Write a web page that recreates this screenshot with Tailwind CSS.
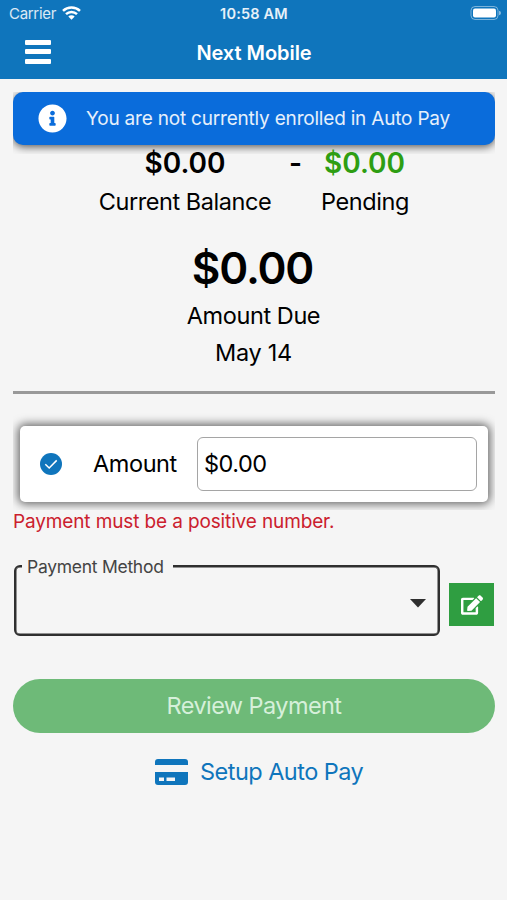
<!DOCTYPE html>
<html lang="en">
<head>
<meta charset="utf-8">
<title>Next Mobile</title>
<script src="https://cdn.jsdelivr.net/npm/@tailwindcss/browser@4"></script>
</head>
<body class="bg-[#f5f5f5]">
<div class="w-[507px] h-[900px] overflow-hidden bg-[#f5f5f5] font-['Inter',sans-serif] text-black flex flex-col whitespace-nowrap">
  <header class="h-[79px] shrink-0 bg-[#0f75bc] text-white">
    <div class="h-[27px] grid grid-cols-3 items-center">
      <div class="flex items-center pl-[9px] gap-[6px]">
        <span class="text-[15px] leading-[27px] tracking-[-0.3px] text-white/85">Carrier</span>
        <svg class="w-[19px] h-[14px] -mt-[2px]" viewBox="0 0 19 14" fill="none" stroke="#fff" stroke-width="2.5"><path d="M1 4.9a12.3 12.3 0 0 1 17 0"/><path d="M4 8.2a8 8 0 0 1 11 0"/><path d="M9.5 13.8 6.3 10.5a4.6 4.6 0 0 1 6.4 0z" fill="#fff" stroke="none"/></svg>
      </div>
      <div class="text-center text-[14.5px] leading-[27px] font-semibold tracking-[0.2px] text-white/90 pl-[1px]">10:58 AM</div>
      <div class="flex justify-end pr-[6px]">
        <svg class="w-[31px] h-[14px] -mt-[1px]" viewBox="0 0 31 14"><rect x="1" y=".5" width="27" height="13" rx="4" fill="none" stroke="#fff" stroke-opacity=".45"/><rect x="3" y="2.5" width="23" height="9" rx="2" fill="#fff"/><path d="M29 4.7q2 .6 2 2.3t-2 2.3z" fill="#fff" fill-opacity=".5"/></svg>
      </div>
    </div>
    <div class="h-[52px] grid grid-cols-[100px_1fr_100px] items-start">
      <div class="pl-[25px] pt-[13px]">
        <div class="w-[26px] flex flex-col gap-[4.8px]">
          <div class="h-[4.7px] bg-white rounded-[1px]"></div><div class="h-[4.7px] bg-white rounded-[1px]"></div><div class="h-[4.7px] bg-white rounded-[1px]"></div>
        </div>
      </div>
      <h1 class="text-center text-[20px] leading-[52px] font-semibold tracking-[-0.05px] pl-[1px]">Next Mobile</h1>
    </div>
  </header>

  <main class="px-[13px] pt-[13px] flex flex-col">
    <div class="relative h-[62px] w-[482px] -mr-[1px] overflow-hidden shrink-0">
      <div class="h-[53px] rounded-[10px] bg-[#0a6cdb] text-white flex items-center pl-[25px] gap-[19px] shadow-[0_2px_8px_rgba(0,0,0,0.65)]">
        <svg class="w-[29px] h-[29px] shrink-0" viewBox="0 0 512 512" fill="#fff"><path d="M256 8C119.043 8 8 119.083 8 256c0 136.997 111.043 248 248 248s248-111.003 248-248C504 119.083 392.957 8 256 8zm0 110c23.196 0 42 18.804 42 42s-18.804 42-42 42-42-18.804-42-42 18.804-42 42-42zm56 254c0 6.627-5.373 12-12 12h-88c-6.627 0-12-5.373-12-12v-24c0-6.627 5.373-12 12-12h12v-64h-12c-6.627 0-12-5.373-12-12v-24c0-6.627 5.373-12 12-12h64c6.627 0 12 5.373 12 12v100h12c6.627 0 12 5.373 12 12v24z"/></svg>
        <span class="text-[19px] tracking-[-0.2px] text-white/90 pt-[1px]">You are not currently enrolled in Auto Pay</span>
      </div>
    </div>

    <div class="-mt-[9px] h-[78px] grid grid-cols-[344px_1fr] grid-rows-[36px_42px] relative">
      <div class="flex">
        <span class="w-[344px] text-center text-[28px] leading-[37px] font-semibold">$0.00</span>
        <span class="-ml-[68px] text-[28px] leading-[37px] font-semibold">-</span>
      </div>
      <div class="-ml-[50px] w-[115px] text-center text-[28px] leading-[37px] font-semibold text-[#2e9e12]">$0.00</div>
      <div class="text-center text-[23.5px] leading-[42px] tracking-[-0.44px]">Current Balance</div>
      <div class="-ml-[50px] w-[116px] text-center text-[23.5px] leading-[42px] tracking-[-0.44px]">Pending</div>
    </div>

    <div class="text-center mt-[18px]">
      <div class="text-[44px] leading-[54px] font-semibold tracking-[-1.2px] pr-[2px]">$0.00</div>
      <div class="text-[23.5px] leading-[37px] mt-[2px] tracking-[-0.42px]">Amount Due</div>
      <div class="text-[23.5px] leading-[37px] tracking-[-0.3px]">May 14</div>
    </div>

    <div class="mt-[20px] h-[2.5px] w-[482px] bg-[#999999]"></div>

    <div class="mt-[18.500px] w-[482px] h-[98px] pt-[14px] px-[7px] overflow-hidden">
      <div class="h-[76px] bg-white rounded-[5px] shadow-[0_0_10px_2px_rgba(0,0,0,0.6)] flex items-center pl-[20px]">
        <svg class="w-[22px] h-[22px]" viewBox="0 0 22 22"><circle cx="11" cy="11" r="11" fill="#0f75bc"/><path d="M5.3 11.2 9.2 15 16.7 7.4" fill="none" stroke="#fff" stroke-width="1.5"/></svg>
        <span class="ml-[31px] w-[104px] text-[23.5px] tracking-[-0.42px]">Amount</span>
        <div class="w-[280px] h-[54px] border border-[#a5a5a5] rounded-[6px] flex items-center pl-[6px] text-[23.5px] tracking-[-0.5px]">$0.00</div>
      </div>
    </div>
    <div class="-mt-[1px] text-[19px] leading-[25px] tracking-[-0.13px] text-[#cb202d]">Payment must be a positive number.</div>

    <div class="mt-[32px] flex items-start">
      <div class="relative w-[427px] h-[71px] ml-[1px] border-2 border-[#2f2f2f] rounded-[6px] -mt-[1px] shadow-[inset_0_0_0_0.5px_#2f2f2f]">
        <span class="absolute left-[6px] -top-[14px] w-[151px] bg-[#f5f5f5] pl-[5px] text-[17.5px] leading-[27px] tracking-[-0.27px] text-[#444]">Payment Method</span>
        <svg class="absolute right-[12px] top-[32px] w-[16px] h-[9px]" viewBox="0 0 16 9"><path d="M0 0h16L8 8.5z" fill="#2f2f2f"/></svg>
      </div>
      <div class="ml-[9px] mt-[17px] w-[45px] h-[43px] bg-[#2f9e41] flex items-center justify-center">
        <svg class="w-[22px] h-[20px]" viewBox="0 0 576 512" fill="#fff"><path d="M402.6 83.2l90.2 90.2c3.8 3.8 3.8 10 0 13.8L274.4 405.6l-92.8 10.3c-12.4 1.4-22.9-9.1-21.5-21.5l10.3-92.8L388.8 83.2c3.8-3.8 10-3.8 13.8 0zm162-22.9l-48.8-48.8c-15.2-15.2-39.9-15.2-55.2 0l-35.4 35.4c-3.8 3.8-3.8 10 0 13.8l90.2 90.2c3.8 3.8 10 3.8 13.8 0l35.4-35.4c15.2-15.3 15.2-40 0-55.2zM384 346.2V448H64V128h229.8c3.2 0 6.2-1.3 8.5-3.5l40-40c7.6-7.6 2.2-20.5-8.500-20.500H48C21.500 64 0 85.500 0 112v352c0 26.500 21.500 48 48 48h352c26.500 0 48-21.500 48-48V306.200c0-10.700-12.900-16-20.500-8.500l-40 40c-2.200 2.300-3.500 5.300-3.500 8.500z"/></svg>
      </div>
    </div>

    <div class="mt-[43px] w-[482px] h-[54px] rounded-[27px] bg-[#6eba78] text-center text-[23.5px] leading-[54px] tracking-[-0.57px] text-[#d6f0da]">Review Payment</div>
    <div class="mt-[19px] h-[40px] flex items-center pl-[142px] gap-[12px] text-[#0f75bc]">
      <svg class="w-[33px] h-[26px] -mt-[1px]" viewBox="0 0 33 26" fill="currentColor"><path d="M0 6V3q0-3 3-3h27q3 0 3 3v3z"/><path fill-rule="evenodd" d="M0 13h33v10q0 3-3 3H3q-3 0-3-3zM4 18.500v3.500h5v-3.500zM11.500 18.500v3.500h8.500v-3.500z"/></svg>
      <span class="text-[23.5px] tracking-[-0.53px]">Setup Auto Pay</span>
    </div>
  </main>
</div>
</body>
</html>
